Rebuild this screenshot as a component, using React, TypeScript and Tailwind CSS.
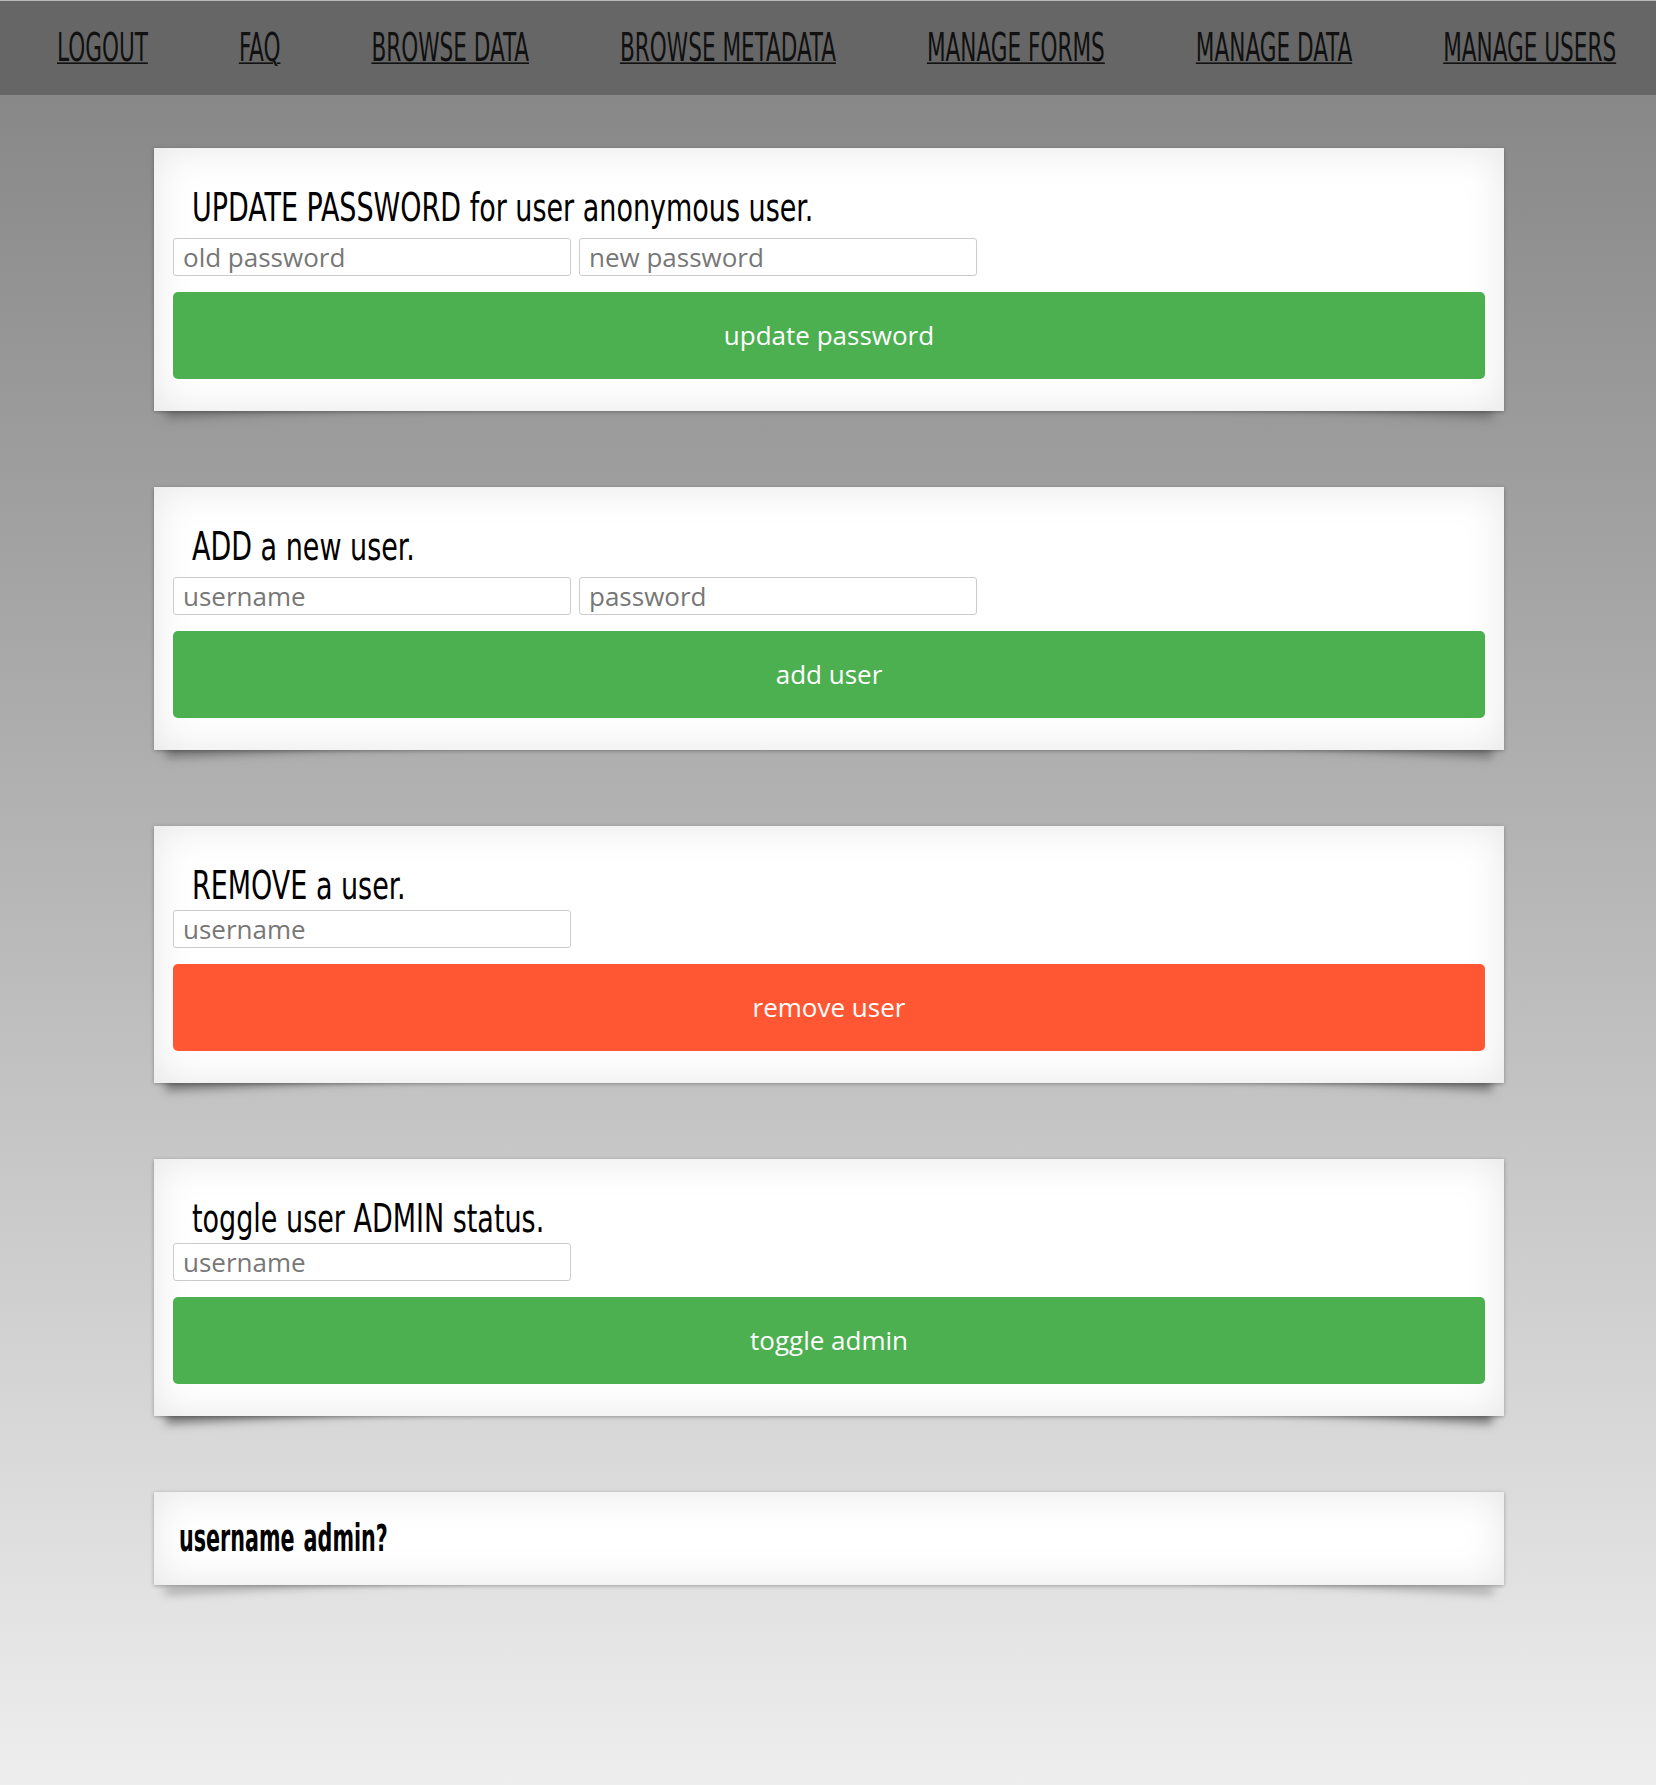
const narrow = { fontFamily: '"Liberation Sans Narrow", "DejaVu Sans Condensed", "Arial Narrow", sans-serif', fontStretch: "condensed" } as const;
const body = { fontFamily: '"Open Sans", "Noto Sans", sans-serif' };

const navItems = ["LOGOUT", "FAQ", "BROWSE DATA", "BROWSE METADATA", "MANAGE FORMS", "MANAGE DATA", "MANAGE USERS"];

const card =
  "relative w-[1350px] ml-[154px] bg-white shadow-[inset_0_0_40px_rgba(0,0,0,0.1),0_1px_4px_rgba(0,0,0,0.3)] " +
  "before:content-[''] before:absolute before:-z-10 before:left-[10px] before:bottom-[15px] before:top-[80%] before:w-1/2 before:max-w-[300px] before:bg-[#777] before:shadow-[0_15px_10px_#777] before:-rotate-3 " +
  "after:content-[''] after:absolute after:-z-10 after:right-[10px] after:bottom-[15px] after:top-[80%] after:w-1/2 after:max-w-[300px] after:bg-[#777] after:shadow-[0_15px_10px_#777] after:rotate-3";

const inputCls =
  "w-[398px] h-[38px] px-[9px] bg-white border border-[#ccc] rounded-[3px] text-[26px] text-[#222] placeholder:text-[#777] outline-none";

function Card({ title, fields, button, color, tight }: { title: string; fields: string[]; button: string; color: string; tight?: boolean }) {
  return (
    <div className={card + " px-[19px] pt-[45px] pb-[32px]"}>
      <h2 className="pl-[19px] h-[30px]">
        <span className="inline-block scale-y-[1.28] text-[30px] leading-[30px] text-black font-normal whitespace-nowrap" style={narrow}>
          {title}
        </span>
      </h2>
      <div className={"flex gap-[8px] " + (tight ? "mt-[9px]" : "mt-[15px]")}>
        {fields.map((f) => (
          <input key={f} type="text" placeholder={f} className={inputCls} style={body} />
        ))}
      </div>
      <button className={"mt-[16px] w-full h-[87px] rounded-[5px] text-white text-[26px] " + color} style={body}>
        {button}
      </button>
    </div>
  );
}

export default function App() {
  return (
    <div className="min-h-[1785px] flex flex-col">
      {/* Top nav */}
      <nav className="h-[95px] bg-[#666] border-t border-[#bbb] flex items-center pl-[57px] gap-[91px]">
        {navItems.map((n) => (
          <a
            key={n}
            href="#"
            className="inline-block scale-y-[1.6] text-[24px] leading-[24px] text-[#111] underline decoration-1 underline-offset-[1px] whitespace-nowrap"
            style={narrow}
          >
            {n}
          </a>
        ))}
      </nav>

      {/* Page body */}
      <main className="flex-1 isolate bg-linear-to-b from-[#888] to-[#eee] pt-[53px] pb-[120px] flex flex-col gap-[76px]">
        <Card title="UPDATE PASSWORD for user anonymous user." fields={["old password", "new password"]} button="update password" color="bg-[#4caf50]" />
        <Card title="ADD a new user." fields={["username", "password"]} button="add user" color="bg-[#4caf50]" />
        <Card title="REMOVE a user." fields={["username"]} button="remove user" color="bg-[#ff5733]" tight />
        <Card title="toggle user ADMIN status." fields={["username"]} button="toggle admin" color="bg-[#4caf50]" tight />

        <div className={card + " h-[93px] pt-[36px] px-[25px]"}>
          <table>
            <thead>
              <tr>
                <th className="p-0 text-left">
                  <span className="inline-block scale-y-[1.6] text-[23px] leading-[23px] font-bold text-black" style={narrow}>username</span>
                </th>
                <th className="p-0 pl-[9px] text-left">
                  <span className="inline-block scale-y-[1.6] text-[23px] leading-[23px] font-bold text-black" style={narrow}>admin?</span>
                </th>
              </tr>
            </thead>
          </table>
        </div>
      </main>
    </div>
  );
}
